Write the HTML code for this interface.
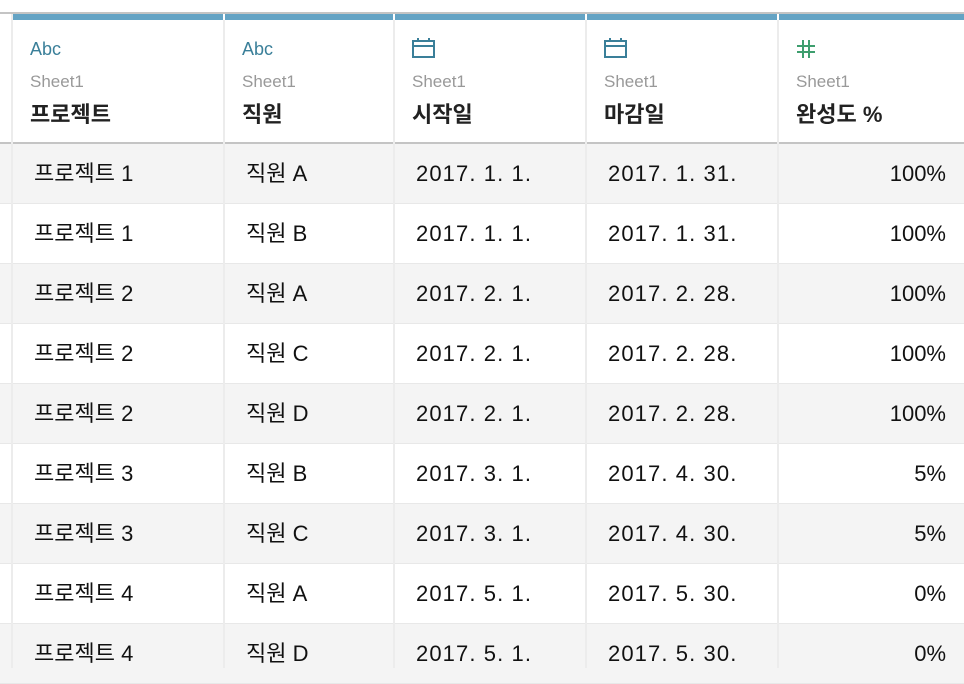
<!DOCTYPE html>
<html><head><meta charset="utf-8"><style>
*{margin:0;padding:0;box-sizing:border-box}
body{width:964px;height:668px;overflow:hidden;background:#fff;font-family:"Liberation Sans","Noto Sans CJK KR",sans-serif;position:relative;color:#111}
.a{position:absolute;white-space:nowrap}
.vl{position:absolute;width:2px;background:#ececec}
.hd{font-size:18px;color:#3a7f99}
.sh{font-size:17px;color:#999}
.tt{font-size:22px;font-weight:bold;color:#222}
.row{position:absolute;left:0;width:964px;height:60px;border-bottom:1px solid #e8e8e8}
.c{position:absolute;font-size:22px;line-height:60px;top:0;color:#111}
.d{letter-spacing:1.1px}
</style></head><body>
<div class="a" style="left:0;top:12px;width:964px;height:2px;background:#c4c4c4"></div>
<div class="a" style="left:13px;top:14px;width:951px;height:6px;background:#64a3c4"></div>
<div class="a" style="left:0;top:142px;width:964px;height:2px;background:#c4c4c4"></div>
<div class="vl" style="left:11px;top:14px;height:654px"></div>
<div class="vl" style="left:223px;top:14px;height:654px"></div>
<div class="vl" style="left:393px;top:14px;height:654px"></div>
<div class="vl" style="left:585px;top:14px;height:654px"></div>
<div class="vl" style="left:777px;top:14px;height:654px"></div>
<div class="a" style="left:223px;top:14px;width:2px;height:6px;background:#fff"></div>
<div class="a" style="left:393px;top:14px;width:2px;height:6px;background:#fff"></div>
<div class="a" style="left:585px;top:14px;width:2px;height:6px;background:#fff"></div>
<div class="a" style="left:777px;top:14px;width:2px;height:6px;background:#fff"></div>

<div class="a hd" style="left:30px;top:39px">Abc</div>
<div class="a hd" style="left:242px;top:39px">Abc</div>
<svg class="a" style="left:412px;top:37px" width="24" height="23" viewBox="0 0 24 23"><rect x="1" y="4" width="21" height="16" fill="none" stroke="#3a7f99" stroke-width="2"/><line x1="1" y1="9" x2="22" y2="9" stroke="#3a7f99" stroke-width="2"/><line x1="6" y1="1" x2="6" y2="5" stroke="#3a7f99" stroke-width="2"/><line x1="17" y1="1" x2="17" y2="5" stroke="#3a7f99" stroke-width="2"/></svg>
<svg class="a" style="left:604px;top:37px" width="24" height="23" viewBox="0 0 24 23"><rect x="1" y="4" width="21" height="16" fill="none" stroke="#3a7f99" stroke-width="2"/><line x1="1" y1="9" x2="22" y2="9" stroke="#3a7f99" stroke-width="2"/><line x1="6" y1="1" x2="6" y2="5" stroke="#3a7f99" stroke-width="2"/><line x1="17" y1="1" x2="17" y2="5" stroke="#3a7f99" stroke-width="2"/></svg>
<svg class="a" style="left:796px;top:39px" width="20" height="20" viewBox="0 0 20 20"><g stroke="#3e9e6e" stroke-width="2"><line x1="7" y1="1" x2="7" y2="19"/><line x1="13" y1="1" x2="13" y2="19"/><line x1="1" y1="7" x2="19" y2="7"/><line x1="1" y1="13" x2="19" y2="13"/></g></svg>

<div class="a sh" style="left:30px;top:72px">Sheet1</div>
<div class="a sh" style="left:242px;top:72px">Sheet1</div>
<div class="a sh" style="left:412px;top:72px">Sheet1</div>
<div class="a sh" style="left:604px;top:72px">Sheet1</div>
<div class="a sh" style="left:796px;top:72px">Sheet1</div>
<div class="a tt" style="left:30px;top:97px">프로젝트</div>
<div class="a tt" style="left:242px;top:97px">직원</div>
<div class="a tt" style="left:412px;top:97px">시작일</div>
<div class="a tt" style="left:604px;top:97px">마감일</div>
<div class="a tt" style="left:796px;top:97px">완성도 %</div>

<div style="position:absolute;left:0;top:144px;width:964px">
<div class="row" style="top:0;background:#f4f4f4"><span class="c" style="left:34px">프로젝트 1</span><span class="c" style="left:246px">직원 A</span><span class="c d" style="left:416px">2017. 1. 1.</span><span class="c d" style="left:608px">2017. 1. 31.</span><span class="c" style="right:18px">100%</span></div>
<div class="row" style="top:60px"><span class="c" style="left:34px">프로젝트 1</span><span class="c" style="left:246px">직원 B</span><span class="c d" style="left:416px">2017. 1. 1.</span><span class="c d" style="left:608px">2017. 1. 31.</span><span class="c" style="right:18px">100%</span></div>
<div class="row" style="top:120px;background:#f4f4f4"><span class="c" style="left:34px">프로젝트 2</span><span class="c" style="left:246px">직원 A</span><span class="c d" style="left:416px">2017. 2. 1.</span><span class="c d" style="left:608px">2017. 2. 28.</span><span class="c" style="right:18px">100%</span></div>
<div class="row" style="top:180px"><span class="c" style="left:34px">프로젝트 2</span><span class="c" style="left:246px">직원 C</span><span class="c d" style="left:416px">2017. 2. 1.</span><span class="c d" style="left:608px">2017. 2. 28.</span><span class="c" style="right:18px">100%</span></div>
<div class="row" style="top:240px;background:#f4f4f4"><span class="c" style="left:34px">프로젝트 2</span><span class="c" style="left:246px">직원 D</span><span class="c d" style="left:416px">2017. 2. 1.</span><span class="c d" style="left:608px">2017. 2. 28.</span><span class="c" style="right:18px">100%</span></div>
<div class="row" style="top:300px"><span class="c" style="left:34px">프로젝트 3</span><span class="c" style="left:246px">직원 B</span><span class="c d" style="left:416px">2017. 3. 1.</span><span class="c d" style="left:608px">2017. 4. 30.</span><span class="c" style="right:18px">5%</span></div>
<div class="row" style="top:360px;background:#f4f4f4"><span class="c" style="left:34px">프로젝트 3</span><span class="c" style="left:246px">직원 C</span><span class="c d" style="left:416px">2017. 3. 1.</span><span class="c d" style="left:608px">2017. 4. 30.</span><span class="c" style="right:18px">5%</span></div>
<div class="row" style="top:420px"><span class="c" style="left:34px">프로젝트 4</span><span class="c" style="left:246px">직원 A</span><span class="c d" style="left:416px">2017. 5. 1.</span><span class="c d" style="left:608px">2017. 5. 30.</span><span class="c" style="right:18px">0%</span></div>
<div class="row" style="top:480px;background:#f4f4f4"><span class="c" style="left:34px">프로젝트 4</span><span class="c" style="left:246px">직원 D</span><span class="c d" style="left:416px">2017. 5. 1.</span><span class="c d" style="left:608px">2017. 5. 30.</span><span class="c" style="right:18px">0%</span></div>
</div>
<div class="vl" style="left:11px;top:144px;height:524px"></div>
<div class="vl" style="left:223px;top:144px;height:524px"></div>
<div class="vl" style="left:393px;top:144px;height:524px"></div>
<div class="vl" style="left:585px;top:144px;height:524px"></div>
<div class="vl" style="left:777px;top:144px;height:524px"></div>
</body></html>
